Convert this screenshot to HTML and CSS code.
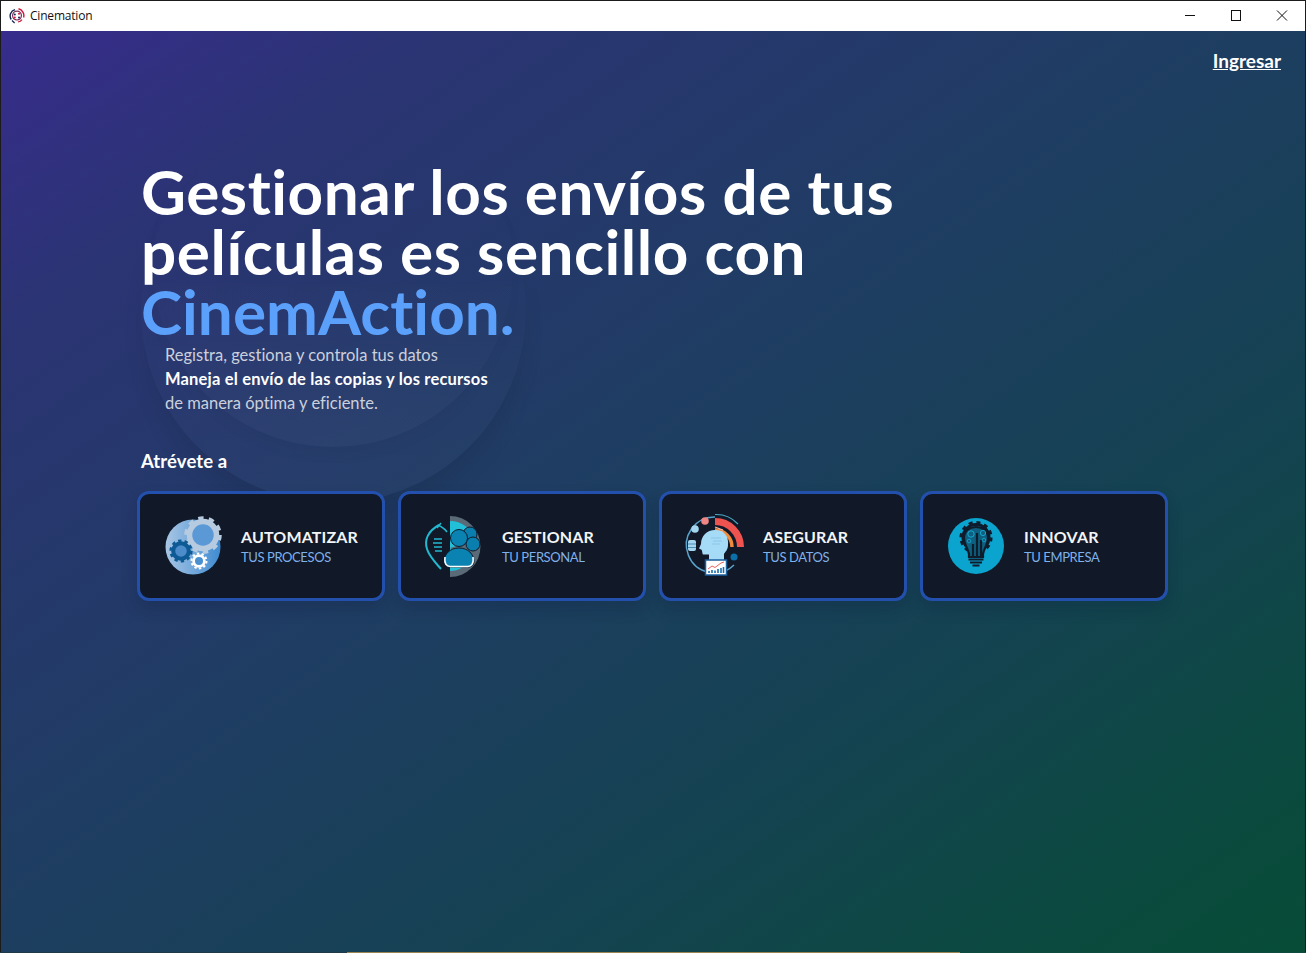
FILE: index.html
```html
<!DOCTYPE html>
<html lang="es">
<head>
<meta charset="utf-8">
<title>Cinemation</title>
<link rel="stylesheet" href="styles.css">
</head>
<body>
<div class="window">
  <header class="titlebar">
    <div class="app">
      <svg class="app-icon" viewBox="0 0 16 16" width="16" height="16" fill="none">
        <path d="M6 1.600A6.600 6.600 0 0 0 2.200 11.500" stroke="#12244f" stroke-width="1.400"/>
        <path d="M9.500 .8A7 7 0 0 1 14.600 9.500" stroke="#d3123c" stroke-width="1.400"/>
        <path d="M13 11.600A6.600 6.600 0 0 1 9 14" stroke="#d3123c" stroke-width="1.200"/>
        <path d="M3 12.500L5.600 15" stroke="#12244f" stroke-width="1.200"/>
        <circle cx="8" cy="7.600" r="4.400" stroke="#7a2a55" stroke-width="1.200"/>
        <circle cx="5.800" cy="6.400" r="1" fill="#12244f"/><circle cx="10" cy="5.800" r="1" fill="#d3123c"/>
        <circle cx="5.800" cy="9.600" r="1" fill="#d3123c"/><circle cx="10" cy="9.400" r="1" fill="#12244f"/>
      </svg>
      <span class="app-name">Cinemation</span>
    </div>
    <div class="controls">
      <svg class="ctl" viewBox="0 0 46 30" width="46" height="30"><path d="M18 14.500h10" stroke="#111" fill="none"/></svg>
      <svg class="ctl" viewBox="0 0 46 30" width="46" height="30"><rect x="18.500" y="9.500" width="9" height="10" stroke="#111" fill="none"/></svg>
      <svg class="ctl" viewBox="0 0 46 30" width="46" height="30"><path d="M18 9.500l10 10M28 9.500l-10 10" stroke="#111" fill="none"/></svg>
    </div>
  </header>
  <main class="main">
    <nav class="nav"><a class="login" href="#">Ingresar</a></nav>
    <section class="hero">
      <div class="circle circle-big"></div>
      <div class="circle circle-small"></div>
      <h1 class="headline">Gestionar los envíos de tus<br>películas es sencillo con<br><span class="accent">CinemAction.</span></h1>
      <p class="intro">Registra, gestiona y controla tus datos<br><strong>Maneja el envío de las copias y los recursos</strong><br>de manera óptima y eficiente.</p>
      <h2 class="dare">Atrévete a</h2>
      <div class="cards">
        <article class="card">
          <svg class="card-icon" viewBox="0 0 56 56" width="56" height="56" fill="none">
            <defs><linearGradient id="g1" x1="0" x2="1" y1="0" y2="0"><stop offset="0" stop-color="#a9c6e4"/><stop offset="1" stop-color="#3e8bd2"/></linearGradient></defs>
            <circle cx="28" cy="29" r="27.500" fill="url(#g1)"/>
            <circle cx="38" cy="17" r="13.500" fill="#5b98d6" stroke="#b7cbe0" stroke-width="5.500"/>
            <circle cx="38" cy="17" r="17" stroke="#b7cbe0" stroke-width="3.500" stroke-dasharray="5.400 5.280"/>
            <circle cx="16" cy="33" r="7.800" fill="#4c8cca" stroke="#0d5a94" stroke-width="4"/>
            <circle cx="16" cy="33" r="10.400" stroke="#0d5a94" stroke-width="2.400" stroke-dasharray="3.400 3.140"/>
            <circle cx="34" cy="43" r="5.400" fill="#4a8fd0" stroke="#fff" stroke-width="2.800"/>
            <circle cx="34" cy="43" r="7.500" stroke="#fff" stroke-width="2" stroke-dasharray="2.400 2.310"/>
          </svg>
          <div class="card-text"><h3 class="card-title">AUTOMATIZAR</h3><p class="card-sub">TUS PROCESOS</p></div>
        </article>
        <article class="card">
          <svg class="card-icon" viewBox="0 0 56 56" width="56" height="56" fill="none">
            <path d="M24 -2A30.500 30.500 0 0 1 24 59V-2Z" fill="#5a6a76"/>
            <path d="M24 3A26 26 0 0 1 49 22L24 30Z" fill="#22c0d8"/>
            <path d="M24 53A23 23 0 0 0 42 44L24 30Z" fill="#22c0d8"/>
            <path d="M13 7C2 13-2 22 1 31C3 38 8 43 15 51" stroke="#22b8cf" stroke-width="2"/>
            <path d="M12 7C16 9 19 11 21 14M15 5l-4 5" stroke="#22b8cf" stroke-width="1.500"/>
            <path d="M8 21h8M7 25h9M8 29h8M9 33h7" stroke="#22b8cf" stroke-width="1.300"/>
            <circle cx="44" cy="16" r="7" fill="#0a7fae" stroke="#0f1a2b"/>
            <circle cx="47" cy="26" r="7" fill="#0a7fae" stroke="#0f1a2b"/>
            <path d="M18 44C18 36 24 30 33 30C42 30 48 36 48 44C48 47 45 49 43 49H23C21 49 18 47 18 44Z" fill="#0a82b2" stroke="#0f1a2b"/>
            <circle cx="33" cy="20" r="8.500" fill="#0a82b2" stroke="#0f1a2b"/>
            <path d="M19 39C18 46 21 48.500 24 48.500H42C45 48.500 48 46 47 39" stroke="#fff" stroke-width="1.500"/>
          </svg>
          <div class="card-text"><h3 class="card-title">GESTIONAR</h3><p class="card-sub">TU PERSONAL</p></div>
        </article>
        <article class="card">
          <svg class="card-icon" viewBox="0 0 56 56" width="56" height="56" fill="none">
            <path d="M28 -1A28 28 0 1 0 47 47" stroke="#5aa3cc" stroke-width="1.500"/>
            <path d="M28 -3.500A30 30 0 0 1 51 6" stroke="#4ca8c8" stroke-width="1.200"/>
            <path d="M28 3.500A25.500 25.500 0 0 1 53.500 29" stroke="#ef5350" stroke-width="7"/>
            <path d="M28 12A17 17 0 0 1 45 29" stroke="#f08a3c" stroke-width="3.500"/>
            <path d="M28 9l8 3M30 13l6 1" stroke="#f4b8b0" stroke-width="1.200"/>
            <circle cx="18" cy="3" r="3.800" fill="#f08585"/>
            <circle cx="8" cy="11" r="3.800" fill="#a5d6f0"/>
            <rect x="1" y="22" width="8" height="11" rx="2" fill="#a5d6f0"/>
            <path d="M1 26h8M1 29.500h8" stroke="#4d8fb5"/>
            <circle cx="47" cy="39" r="3.500" fill="#0b6fa8"/>
            <path d="M28 12C37 12 42 18 41 27C41 32 38 34 37 36V42H22V36.500H16C15 35 15.500 32 14 31.500L12 30.500L14 26C14 18 20 12 28 12Z" fill="#a5dbf7"/>
            <path d="M24 20h10M26 23h9M25 26h8" stroke="#86c3e6" stroke-width=".8"/>
            <rect x="18.500" y="42" width="21" height="15" fill="#fff" stroke="#1a5f9e" stroke-width="1.500"/>
            <path d="M21 51l4-3 3 1.500 6-4.500 3-1" stroke="#e2554f" stroke-width=".9"/>
            <path d="M22 55v-2M25 55v-3M28 55v-2.500M31 55v-4M34 55v-5M36.500 55v-6" stroke="#1a6fae" stroke-width="1.600"/>
          </svg>
          <div class="card-text"><h3 class="card-title">ASEGURAR</h3><p class="card-sub">TUS DATOS</p></div>
        </article>
        <article class="card">
          <svg class="card-icon" viewBox="0 0 56 56" width="56" height="56" fill="none">
            <circle cx="28" cy="28" r="28" fill="#0aa4cf"/>
            <circle cx="28" cy="19.500" r="13" stroke="#0f1c2c" stroke-width="3"/>
            <circle cx="28" cy="19.500" r="14.800" stroke="#0f1c2c" stroke-width="3.500" stroke-dasharray="3.900 3.850"/>
            <path d="M16 20C16 13 21 9 28 9C35 9 40 13 40 20C40 27 36 30 35 36V39H21V36C20 30 16 27 16 20Z" fill="#0e5f80" stroke="#0f1c2c" stroke-width="2.200"/>
            <path d="M29 38V15M33 38V22M25 38V26" stroke="#0f1c2c" stroke-width="2.200"/>
            <circle cx="23" cy="16" r="3.200" stroke="#13a9d2" stroke-width="1"/>
            <circle cx="35" cy="15" r="2.600" stroke="#13a9d2" stroke-width="1"/>
            <circle cx="21" cy="23" r="1.800" stroke="#13a9d2" stroke-width=".8"/>
            <circle cx="36" cy="22" r="1.800" stroke="#13a9d2" stroke-width=".8"/>
            <path d="M20.500 41.500h15M22 44.500h12M24.500 47.500h7" stroke="#0f1c2c" stroke-width="2"/>
          </svg>
          <div class="card-text"><h3 class="card-title">INNOVAR</h3><p class="card-sub">TU EMPRESA</p></div>
        </article>
      </div>
    </section>
  </main>
</div>
</body>
</html>
```
FILE: styles.css
```css
* { box-sizing: border-box; }
html, body { margin: 0; padding: 0; height: 100%; overflow: hidden; }
body {
  font-family: "Lato", "Noto Sans", sans-serif;
  font-variant-ligatures: none;
  background: #222;
}

.window {
  width: 1306px;
  height: 953px;
  display: flex;
  flex-direction: column;
  padding: 1px;
  background:
    linear-gradient(90deg, #1f3a44 26.6%, #9c8550 26.6%, #9c8550 73.5%, #0f4a40 73.5%) bottom / 100% 1px no-repeat,
    #1b1b1b;
}

.titlebar {
  height: 30px;
  flex: none;
  background: #fff;
  display: flex;
  justify-content: space-between;
  align-items: center;
}
.app { display: flex; align-items: center; padding: 0 0 1px 8px; gap: 5px; }
.app-icon { display: block; }
.app-name {
  font-family: "Open Sans", "Noto Sans", sans-serif;
  font-size: 12px;
  letter-spacing: -.2px;
  color: #111;
}
.controls { display: flex; }
.ctl { display: block; }

.main {
  flex: 1;
  background: linear-gradient(to bottom right, #372c8c 0%, #2b3474 16%, #1f3d63 45%, #154253 68%, #0b4a3f 90%, #064c36 100%);
  overflow: hidden;
}
.nav { display: flex; justify-content: flex-end; padding: 18px 24px 0 0; }
.login { font-size: 19px; line-height: 24px; font-weight: 700; color: #fff; text-decoration: underline; }

.hero { position: relative; margin: 88px 0 0 140px; }
.circle { position: absolute; border-radius: 50%; }
.circle-big {
  left: 0; top: -43px; width: 385px; height: 385px;
  background: linear-gradient(to bottom, rgba(255,255,255,0) 35%, rgba(255,255,255,.018));
  box-shadow: 0 20px 25px -5px rgba(0,0,0,.1);
}
.circle-small {
  left: 12px; top: -74px; width: 360px; height: 360px;
  background: linear-gradient(to bottom, rgba(255,255,255,0) 50%, rgba(255,255,255,.022));
  box-shadow: 0 10px 15px -3px rgba(0,0,0,.04);
}

.headline, .intro, .dare, .cards { position: relative; }
.headline {
  margin: 0 0 2px;
  font-size: 62px;
  line-height: 60px;
  font-weight: 700;
  letter-spacing: .55px;
  color: #fff;
}
.accent { color: #5ba1fb; font-weight: 700; letter-spacing: .05px; }
.intro {
  margin: 0 0 0 24px;
  font-size: 16.5px;
  line-height: 24px;
  color: #cbd0dc;
}
.intro strong { color: #fff; font-weight: 700; letter-spacing: .18px; }
.dare { margin: 34px 0 18px; font-size: 18.500px; line-height: 24px; letter-spacing: .1px; font-weight: 700; color: #fff; }

.cards { display: flex; gap: 13px; margin-left: -4px; }
.card {
  width: 248px;
  height: 110px;
  display: flex;
  align-items: center;
  gap: 20px;
  padding-left: 25px;
  background: #111827;
  border: 3px solid #2450ad;
  border-radius: 12px;
  box-shadow: 0 8px 16px rgba(10,20,50,.2);
}
.card-icon { display: block; flex: none; overflow: visible; }
.card-text { display: flex; flex-direction: column; gap: 1px; padding-top: 1px; }
.card-title { margin: 0; font-size: 16px; line-height: 20px; font-weight: 700; letter-spacing: .15px; color: #f3f4f6; }
.card-sub { margin: 0; font-size: 13px; line-height: 18px; letter-spacing: -.4px; color: #7fb1ea; }
```
